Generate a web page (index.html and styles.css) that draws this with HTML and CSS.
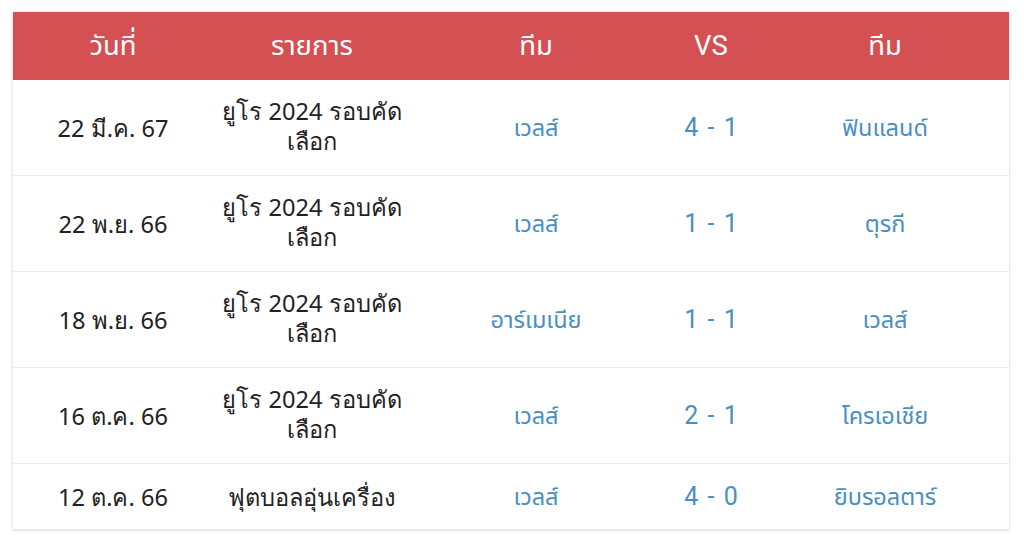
FILE: index.html
```html
<!DOCTYPE html>
<html lang="th">
<head>
<meta charset="utf-8">
<link rel="stylesheet" href="styles.css">
</head>
<body>
<div class="wrap">
<table class="matches">
  <colgroup>
    <col class="c-date"><col class="c-event"><col class="c-team"><col class="c-vs"><col class="c-team2">
  </colgroup>
  <thead>
    <tr><th>วันที่</th><th>รายการ</th><th>ทีม</th><th>VS</th><th>ทีม</th></tr>
  </thead>
  <tbody>
    <tr class="tall"><td class="txt">22 มี.ค. 67</td><td class="txt two">ยูโร 2024 รอบคัด<br>เลือก</td><td class="lnk">เวลส์</td><td class="lnk score">4 - 1</td><td class="lnk">ฟินแลนด์</td></tr>
    <tr class="tall"><td class="txt">22 พ.ย. 66</td><td class="txt two">ยูโร 2024 รอบคัด<br>เลือก</td><td class="lnk">เวลส์</td><td class="lnk score">1 - 1</td><td class="lnk">ตุรกี</td></tr>
    <tr class="tall"><td class="txt">18 พ.ย. 66</td><td class="txt two">ยูโร 2024 รอบคัด<br>เลือก</td><td class="lnk">อาร์เมเนีย</td><td class="lnk score">1 - 1</td><td class="lnk">เวลส์</td></tr>
    <tr class="tall"><td class="txt">16 ต.ค. 66</td><td class="txt two">ยูโร 2024 รอบคัด<br>เลือก</td><td class="lnk">เวลส์</td><td class="lnk score">2 - 1</td><td class="lnk">โครเอเชีย</td></tr>
    <tr class="short"><td class="txt">12 ต.ค. 66</td><td class="txt">ฟุตบอลอุ่นเครื่อง</td><td class="lnk">เวลส์</td><td class="lnk score">4 - 0</td><td class="lnk">ยิบรอลตาร์</td></tr>
  </tbody>
</table>
</div>
</body>
</html>
```
FILE: styles.css
```css
html, body { margin: 0; padding: 0; background: #fff; }
.wrap { padding: 12px 0 17px 13px; }
.matches {
  width: 996px;
  border-collapse: collapse;
  table-layout: fixed;
  box-shadow: 0 0 3px rgba(0,0,0,0.2);
}
.c-date { width: 200px; }
.c-event { width: 198px; }
.c-team { width: 250px; }
.c-vs { width: 100px; }
.c-team2 { width: 248px; }
.matches th {
  background: #d45052;
  color: #fff;
  height: 68px;
  padding: 0;
  font-family: Roboto, "Noto Sans Thai", "Noto Sans", sans-serif;
  font-weight: 400;
  font-size: 27.5px;
  line-height: 30px;
  text-align: center;
}
.matches td {
  text-align: center;
  padding: 0;
  border-top: 1px solid #efefef;
  font-size: 23.5px;
  line-height: 30px;
}
.tall td { height: 95px; }
.short td { height: 65px; }
.matches td.txt { color: #222; font-family: "Noto Sans", sans-serif; font-size: 23.6px; }
.matches .tall td.txt.two { padding-bottom: 4px; height: 91px; }
.matches td.lnk { color: #4a8fc2; font-family: Roboto, "Noto Sans Thai", "Noto Sans", sans-serif; }
.matches td.score { font-size: 25px; word-spacing: 3px; }
.matches tbody tr:first-child td { border-top: 0; }
.matches tbody tr:last-child td { border-bottom: 1px solid #e6e6e6; }
```
